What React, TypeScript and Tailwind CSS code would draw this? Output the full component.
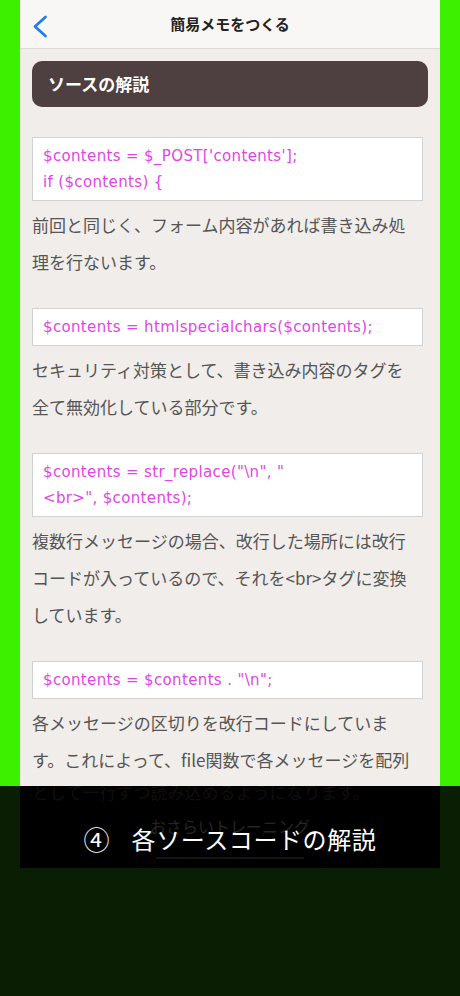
import React from "react";

const JP = '"Noto Sans CJK JP", "Noto Sans", sans-serif';
const CODE = '"DejaVu Sans", "Noto Sans CJK JP", sans-serif';

function CodeBox({ lines, first }: { lines: string[]; first?: boolean }) {
  return (
    <div
      className={`${first ? "mt-[30px]" : "mt-[28px]"} mr-[5px] border border-[#d2d2d2] bg-white px-[10px] py-[5px] text-[15px] leading-[26px] tracking-[0.35px] text-[#e344e6]`}
      style={{ fontFamily: CODE }}
    >
      {lines.map((l, i) => (
        <div key={i} className="whitespace-pre">
          {l}
        </div>
      ))}
    </div>
  );
}

function Para({ children }: { children: React.ReactNode }) {
  return (
    <p className="mt-[6px] mr-[8px] text-[17px] leading-[36.6px] text-[#555]">
      {children}
    </p>
  );
}

export default function App() {
  return (
    <div
      className="relative flex h-[996px] w-[460px] justify-center overflow-hidden bg-[#3cf000]"
      style={{ fontFamily: JP }}
    >
      <div className="flex h-full w-[420px] flex-col bg-[#f0edea]">
        <div className="relative flex h-[49px] shrink-0 items-center justify-center border-b border-[#dcd9d6] bg-[#f8f7f5]">
          <svg
            className="absolute left-[12px] top-[15px]"
            width="16"
            height="23"
            viewBox="0 0 16 23"
            fill="none"
          >
            <path
              d="M13.5 2 L3 11.5 L13.5 21"
              stroke="#1f7cee"
              strokeWidth="2.7"
              strokeLinecap="round"
              strokeLinejoin="round"
            />
          </svg>
          <span className="text-[15px] font-semibold text-[#222]">簡易メモをつくる</span>
        </div>

        <div className="flex flex-col px-[12px]">
          <div className="mt-[12px] flex h-[46px] items-center rounded-[10px] bg-[#4e4040] pl-[16px]">
            <span className="text-[17px] font-bold text-white">ソースの解説</span>
          </div>

          <CodeBox first lines={["$contents = $_POST['contents'];", "if ($contents) {"]} />
          <Para>前回と同じく、フォーム内容があれば書き込み処理を行ないます。</Para>

          <CodeBox lines={["$contents = htmlspecialchars($contents);"]} />
          <Para>セキュリティ対策として、書き込み内容のタグを全て無効化している部分です。</Para>

          <CodeBox lines={['$contents = str_replace("\\n", "', '<br>", $contents);']} />
          <Para>複数行メッセージの場合、改行した場所には改行コードが入っているので、それを&lt;br&gt;タグに変換しています。</Para>

          <CodeBox lines={['$contents = $contents . "\\n";']} />
          <Para>各メッセージの区切りを改行コードにしています。これによって、file関数で各メッセージを配列</Para>
        </div>
      </div>

      <div className="absolute inset-x-0 bottom-0 top-[786px] flex flex-col">
        <div className="flex h-[82px] shrink-0">
          <div className="w-[20px] bg-[#0a1e04]" />
          <div className="relative flex w-[420px] justify-center gap-[22px] overflow-hidden bg-black pt-[39px]">
            <div className="absolute left-[12px] top-[-12px] whitespace-nowrap text-[17px] leading-[36px] text-[#0f0f0f]">
              として一行ずつ読み込めるようになります。
            </div>
            <div className="absolute left-0 right-0 top-[28px] flex flex-col items-center">
              <span className="text-[16px] leading-[24px] text-[#262626]">おさらいトレーニング</span>
              <div className="mt-[19px] h-[2px] w-[148px] bg-[#141414]" />
            </div>
            <span className="relative text-[26px] leading-[28px] text-white">④</span>
            <span className="relative text-[24px] font-normal leading-[28px] tracking-[0.6px] text-white">
              各ソースコードの解説
            </span>
          </div>
          <div className="w-[20px] bg-[#0a1e04]" />
        </div>
        <div className="flex-1 bg-[#0a1e04]" />
      </div>
    </div>
  );
}
